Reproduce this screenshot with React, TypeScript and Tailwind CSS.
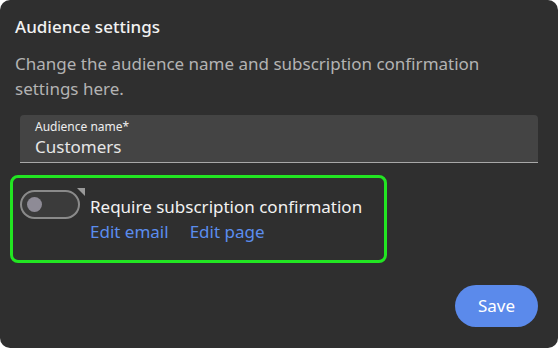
import React from "react";

const Toggle: React.FC = () => (
  <div className="relative w-[60px] h-[29px] shrink-0">
    <div className="w-full h-full rounded-full border-2 border-[#8a8a8a] bg-[#3b3b3b] flex items-center pl-[5px]">
      <div className="w-[15px] h-[15px] rounded-full bg-[#8e8b96]" />
    </div>
    {/* small corner marker */}
    <svg className="absolute -top-[2px] -right-[5px]" width="8" height="8" viewBox="0 0 8 8">
      <polygon points="0,0 8,0 8,8" fill="#9a9a9a" />
    </svg>
  </div>
);

export default function App() {
  return (
    <div
      className="w-[558px] h-[348px] bg-white"
      style={{ fontFamily: "'Noto Sans', Lato, sans-serif" }}
    >
      <div className="h-full rounded-[10px] bg-[#2f2f2f] flex flex-col px-[15px]">
        <h2 className="mt-[16px] text-[17px] leading-[22px] font-medium text-[#f2f2f2]">
          Audience settings
        </h2>
        <p className="mt-[13px] text-[17px] leading-[25px] text-[#b3b3b3]">
          Change the audience name and subscription confirmation settings here.
        </p>

        {/* text field */}
        <div className="mx-[5px] mt-[14px] h-[48px] rounded-t-[4px] bg-[#444444] border-b border-[#a8a8a8] px-[15px] pt-[4px] flex flex-col">
          <span className="text-[12px] leading-[16px] text-[#eeeeee]">Audience name*</span>
          <span className="text-[17px] leading-[23px] text-[#e6e6e6]">Customers</span>
        </div>

        {/* confirmation row */}
        <div className="mt-[12px] -ml-[5px] w-[377px] h-[88px] rounded-[8px] border-[3px] border-[#22e522] flex gap-[10px] pl-[7px] pt-[12px]">
          <Toggle />
          <div className="flex flex-col mt-[4px]">
            <span className="text-[17px] leading-[25px] text-[#f2f2f2]">
              Require subscription confirmation
            </span>
            <div className="flex gap-[21px] text-[17px] leading-[25px] text-[#5b8dee]">
              <span>Edit email</span>
              <span>Edit page</span>
            </div>
          </div>
        </div>

        <button className="mt-auto mb-[21px] mr-[5px] self-end w-[83px] h-[42px] rounded-full bg-[#5b8aeb] text-white text-[17px]">
          Save
        </button>
      </div>
    </div>
  );
}
